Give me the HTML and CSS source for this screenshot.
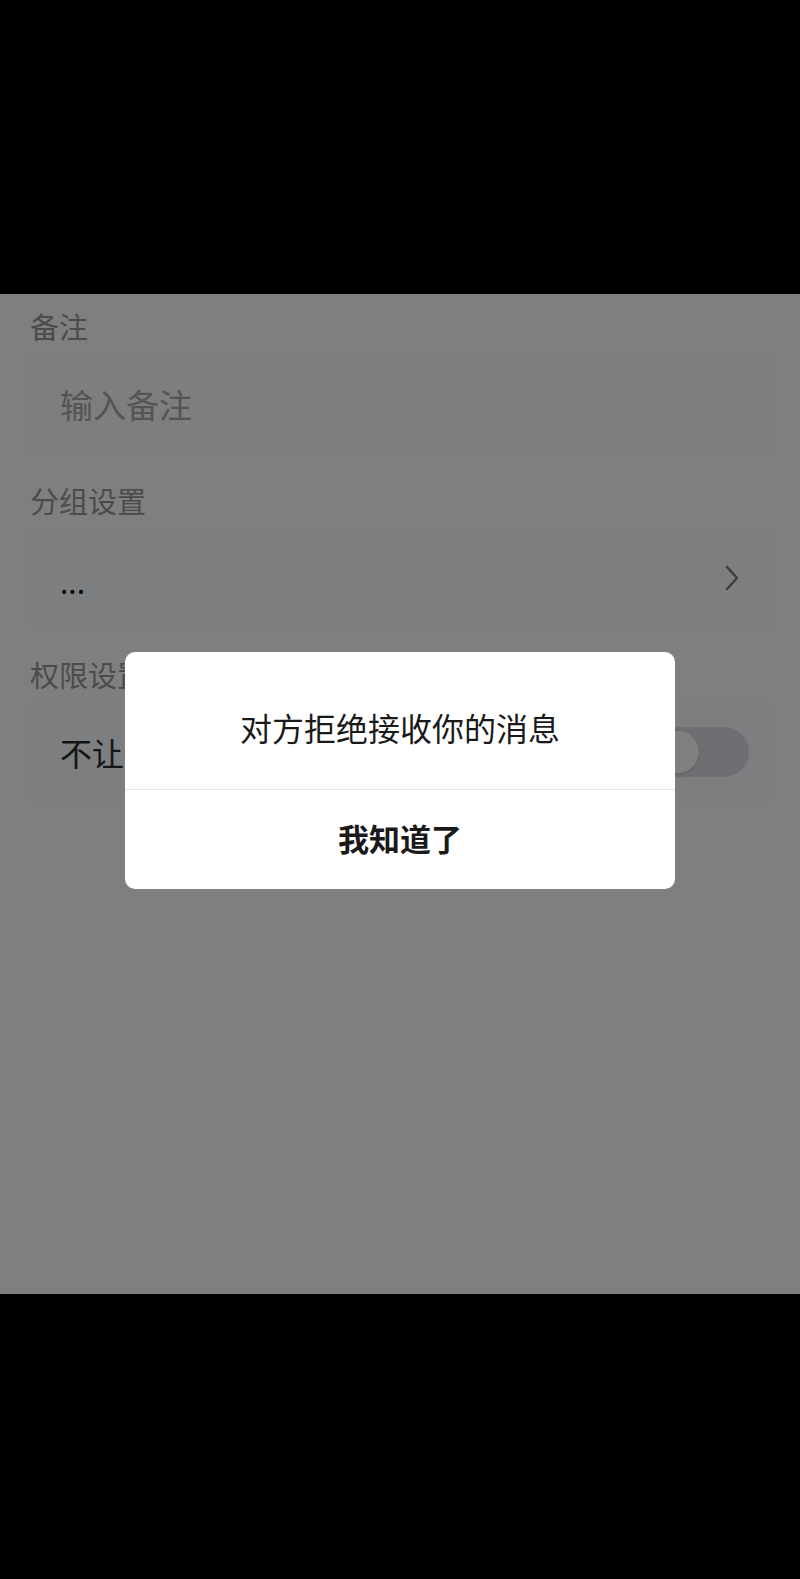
FILE: index.html
```html
<!DOCTYPE html>
<html lang="zh-CN">
<head>
  <meta charset="UTF-8">
  <meta name="viewport" content="width=device-width, initial-scale=1.0">
  <title>好友设置</title>
  <link rel="stylesheet" href="styles.css">
</head>
<body>
  <div class="bar_top"></div>

  <div class="screen">
    <div class="form">
      <!-- 备注 -->
      <section class="field">
        <h3 class="label">备注</h3>
        <div class="box">
          <span class="placeholder">输入备注</span>
        </div>
      </section>

      <!-- 分组设置 -->
      <section class="field">
        <h3 class="label">分组设置</h3>
        <div class="box">
          <span class="value">...</span>
          <svg class="arrow" width="16" height="28" viewBox="0 0 16 28">
            <polyline points="3,3 13,14 3,25" fill="none" stroke="#7a7a7a" stroke-width="2.4" stroke-linecap="round" stroke-linejoin="round"/>
          </svg>
        </div>
      </section>

      <!-- 权限设置 -->
      <section class="field">
        <h3 class="label">权限设置</h3>
        <div class="box">
          <span class="value big">不让他看我的动态</span>
          <span class="switch"><i></i></span>
        </div>
      </section>
    </div>

    <!-- 딤 + 알림창 -->
    <div class="dim">
      <div class="alert">
        <p class="msg">对方拒绝接收你的消息</p>
        <a href="#" class="btn_ok">我知道了</a>
      </div>
    </div>
  </div>

  <div class="bar_bottom"></div>
</body>
</html>
```

FILE: styles.css
```css
*{margin: 0;padding: 0;box-sizing: border-box;}
body{
  background-color: #000;
  font-family: "Noto Sans CJK SC", "Noto Sans", sans-serif;
  width: 800px;
}
.bar_top{height: 294px;background-color: #000;}
.bar_bottom{height: 285px;background-color: #000;}

.screen{
  height: 1000px;
  background-color: #fff;
  position: relative;
  overflow: hidden;
}
.form{
  padding: 12px 28px 0 30px;
  display: flex;
  flex-direction: column;
  gap: 26px;
}
.field{display: flex;flex-direction: column;gap: 8px;}
.label{
  font-size: 29px;
  font-weight: normal;
  line-height: 40px;
  color: #979797;
}
.box{
  height: 100px;
  background-color: #fafcff;
  border-radius: 4px;
  display: flex;
  align-items: center;
  justify-content: space-between;
  padding: 0 23px 0 30px;
}
.placeholder{font-size: 33px;color: #a9a9ab;}
.value{font-size: 30px;color: #111;padding-top: 6px;}
.value.big{font-size: 32px;padding-top: 0;color: #2a2a2a;}
.arrow{margin-right: 9px;margin-top: 0;}

.switch{
  width: 96px;height: 50px;
  border-radius: 25px;
  background-color: #dcdee6;
  display: flex;
  align-items: center;
  padding: 0 4px;
}
.switch i{
  width: 42px;height: 42px;
  border-radius: 50%;
  background-color: #fff;
  box-shadow: 0 1px 3px rgba(0,0,0,0.15);
}

/* 딤 배경 위에 알림창 */
.dim{
  position: absolute;
  top: 0;left: 0;
  width: 100%;height: 100%;
  background-color: rgba(0,0,0,0.5);
}
.alert{
  position: absolute;
  top: 358px;left: 125px;
  width: 550px;
  background-color: #fff;
  border-radius: 10px;
  overflow: hidden;
}
.msg{
  height: 138px;
  display: flex;
  align-items: center;
  justify-content: center;
  font-size: 32px;
  color: #1a1a1a;
  border-bottom: 1px solid #e6e6e6;
  padding-top: 12px;
}
.btn_ok{
  display: flex;
  height: 99px;
  align-items: center;
  justify-content: center;
  font-size: 31px;
  font-weight: bold;
  color: #1a1a1a;
  text-decoration: none;
  padding-bottom: 4px;
}
```
